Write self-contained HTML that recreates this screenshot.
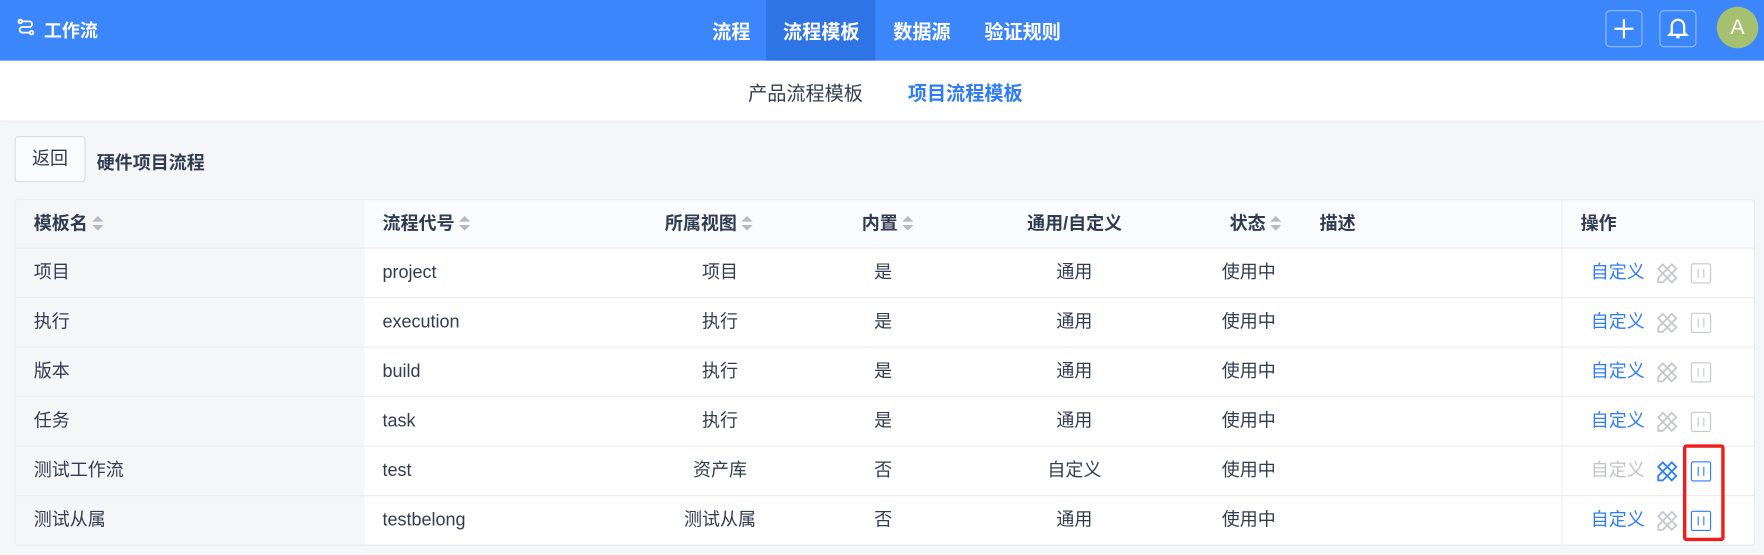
<!DOCTYPE html>
<html><head><meta charset="utf-8"><style>
*{box-sizing:border-box;margin:0;padding:0}
html,body{width:1764px;height:554px;overflow:hidden;background:#f5f6f8}
#w{position:absolute;left:0;top:0;width:1568px;height:493px;transform:scale(1.125);transform-origin:0 0;font-family:"Liberation Sans","Noto Sans CJK SC",sans-serif;font-size:16px;color:#313c52}
.nav{position:absolute;left:0;top:0;width:1568px;height:54px;background:#3a86fa;color:#fff}
.abs{position:absolute;white-space:nowrap}
.sub{position:absolute;left:0;top:54px;width:1568px;height:53px;background:#fff;box-shadow:0 1px 3px rgba(0,0,0,.05)}
.tbl{position:absolute;left:13px;top:177px;width:1547px;height:308px;background:#fff;border:1px solid #e8eaee;border-radius:3px;overflow:hidden}
.row{position:absolute;left:0;width:1547px;border-bottom:1px solid #ececf0}
.c{position:absolute;top:0;line-height:43px;white-space:nowrap}
.cc{position:absolute;top:0;line-height:43px;white-space:nowrap;width:200px;margin-left:-100px;text-align:center}
.h{font-weight:bold;color:#313c52}
.sort{display:inline-block;vertical-align:middle;margin-left:4px;width:10px;height:14px;position:relative;top:-1px}
.sort:before{content:"";position:absolute;left:0;top:0;border:5px solid transparent;border-top:0;border-bottom:5px solid #b5b9c2}
.sort:after{content:"";position:absolute;left:0;top:8px;border:5px solid transparent;border-bottom:0;border-top:5px solid #b5b9c2}
.blue{color:#2e7cf6}
</style></head><body><div id="w">
<div class="nav">
  <svg class="abs" style="left:15px;top:16px" width="16" height="16" viewBox="0 0 16 16" fill="none" stroke="#fff" stroke-width="1.6"><circle cx="3" cy="3" r="1.6"/><path d="M5 3h6a2.5 2.5 0 0 1 0 5H5a2.5 2.5 0 0 0 0 5h6"/><circle cx="13" cy="13" r="1.6"/></svg>
  <div class="abs" style="left:39px;top:14px;font-size:16px;font-weight:bold">工作流</div>
  <div class="abs" style="left:633px;top:14px;font-size:17px;font-weight:bold">流程</div>
  <div class="abs" style="left:681px;top:0;width:97px;height:54px;background:#2f74e4"></div>
  <div class="abs" style="left:696px;top:14px;font-size:17px;font-weight:bold">流程模板</div>
  <div class="abs" style="left:794px;top:14px;font-size:17px;font-weight:bold">数据源</div>
  <div class="abs" style="left:875px;top:14px;font-size:17px;font-weight:bold">验证规则</div>
  <div class="abs" style="left:1427px;top:9px;width:33px;height:33px;border:1px solid rgba(255,255,255,.45);border-radius:4px"></div>
  <svg class="abs" style="left:1433px;top:15px" width="21" height="21"><path d="M10.5 2v17M2 10.5h17" stroke="#fff" stroke-width="2"/></svg>
  <div class="abs" style="left:1475px;top:9px;width:33px;height:33px;border:1px solid rgba(255,255,255,.45);border-radius:4px"></div>
  <svg class="abs" style="left:1482px;top:14px" width="19" height="22" viewBox="0 0 19 22" fill="none" stroke="#fff" stroke-width="2"><path d="M4 15V9a5.5 5.5 0 0 1 11 0v6l2 2H2z"/><path d="M8 19h3"/></svg>
  <div class="abs" style="left:1526px;top:6px;width:37px;height:37px;border-radius:50%;background:#a5c170;color:#fff;font-size:19px;text-align:center;line-height:37px">A</div>
</div>
<div class="sub">
  <div class="abs" style="left:665px;top:15px;font-size:17px;color:#313c52">产品流程模板</div>
  <div class="abs" style="left:807px;top:15px;font-size:17px;font-weight:bold;color:#2e7cf6">项目流程模板</div>
</div>
<div class="abs" style="left:13px;top:121px;width:63px;height:41px;border:1px solid #d8dbe3;border-radius:3px;background:#fbfcfe;text-align:center;line-height:39px">返回</div>
<div class="abs" style="left:86px;top:131px;font-weight:bold">硬件项目流程</div>
<div class="tbl">
  <div class="abs" style="left:0;top:0;width:310px;height:308px;background:#f5f6f8"></div>
  <div class="abs" style="left:1374px;top:0;width:1px;height:308px;background:#ececf0"></div>
  <div class="row" style="top:0;height:43px;background:transparent">
    <div class="abs" style="left:310px;top:0;width:1064px;height:42px;background:#fafbfd"></div>
    <div class="abs" style="left:1375px;top:0;width:172px;height:42px;background:#fafbfd"></div>
    <div class="c h" style="left:16px">模板名<span class="sort"></span></div>
    <div class="c h" style="left:326px">流程代号<span class="sort"></span></div>
    <div class="c h" style="left:577px">所属视图<span class="sort"></span></div>
    <div class="c h" style="left:752px">内置<span class="sort"></span></div>
    <div class="c h" style="left:899px">通用/自定义</div>
    <div class="c h" style="left:1079px">状态<span class="sort"></span></div>
    <div class="c h" style="left:1159px">描述</div>
    <div class="c h" style="left:1391px">操作</div>
  </div>
  <div class="row" style="top:43px;height:44px"><div class="c" style="left:16px">项目</div><div class="c" style="left:326px">project</div><div class="cc" style="left:626px">项目</div><div class="cc" style="left:771px">是</div><div class="cc" style="left:941px">通用</div><div class="cc" style="left:1096px">使用中</div><div class="c blue" style="left:1400px">自定义</div>
  <svg class="abs" style="left:1457px;top:11px" width="22" height="22" viewBox="0 0 22 22" fill="none" stroke="#c4c7cc" stroke-width="1.6"><path d="M3 15L15 3l4 4L7 19H3z"/><path d="M3 7l4-4 12 12-4 4z"/></svg><div class="abs" style="left:1489px;top:13px;width:18px;height:18px;border:1.5px solid #c4c7cc;border-radius:2px"></div><div class="abs" style="left:1495px;top:18px;width:6px;height:8px;border-left:1.5px solid #c4c7cc;border-right:1.5px solid #c4c7cc"></div></div>
  <div class="row" style="top:87px;height:44px"><div class="c" style="left:16px">执行</div><div class="c" style="left:326px">execution</div><div class="cc" style="left:626px">执行</div><div class="cc" style="left:771px">是</div><div class="cc" style="left:941px">通用</div><div class="cc" style="left:1096px">使用中</div><div class="c blue" style="left:1400px">自定义</div>
  <svg class="abs" style="left:1457px;top:11px" width="22" height="22" viewBox="0 0 22 22" fill="none" stroke="#c4c7cc" stroke-width="1.6"><path d="M3 15L15 3l4 4L7 19H3z"/><path d="M3 7l4-4 12 12-4 4z"/></svg><div class="abs" style="left:1489px;top:13px;width:18px;height:18px;border:1.5px solid #c4c7cc;border-radius:2px"></div><div class="abs" style="left:1495px;top:18px;width:6px;height:8px;border-left:1.5px solid #c4c7cc;border-right:1.5px solid #c4c7cc"></div></div>
  <div class="row" style="top:131px;height:44px"><div class="c" style="left:16px">版本</div><div class="c" style="left:326px">build</div><div class="cc" style="left:626px">执行</div><div class="cc" style="left:771px">是</div><div class="cc" style="left:941px">通用</div><div class="cc" style="left:1096px">使用中</div><div class="c blue" style="left:1400px">自定义</div>
  <svg class="abs" style="left:1457px;top:11px" width="22" height="22" viewBox="0 0 22 22" fill="none" stroke="#c4c7cc" stroke-width="1.6"><path d="M3 15L15 3l4 4L7 19H3z"/><path d="M3 7l4-4 12 12-4 4z"/></svg><div class="abs" style="left:1489px;top:13px;width:18px;height:18px;border:1.5px solid #c4c7cc;border-radius:2px"></div><div class="abs" style="left:1495px;top:18px;width:6px;height:8px;border-left:1.5px solid #c4c7cc;border-right:1.5px solid #c4c7cc"></div></div>
  <div class="row" style="top:175px;height:44px"><div class="c" style="left:16px">任务</div><div class="c" style="left:326px">task</div><div class="cc" style="left:626px">执行</div><div class="cc" style="left:771px">是</div><div class="cc" style="left:941px">通用</div><div class="cc" style="left:1096px">使用中</div><div class="c blue" style="left:1400px">自定义</div>
  <svg class="abs" style="left:1457px;top:11px" width="22" height="22" viewBox="0 0 22 22" fill="none" stroke="#c4c7cc" stroke-width="1.6"><path d="M3 15L15 3l4 4L7 19H3z"/><path d="M3 7l4-4 12 12-4 4z"/></svg><div class="abs" style="left:1489px;top:13px;width:18px;height:18px;border:1.5px solid #c4c7cc;border-radius:2px"></div><div class="abs" style="left:1495px;top:18px;width:6px;height:8px;border-left:1.5px solid #c4c7cc;border-right:1.5px solid #c4c7cc"></div></div>
  <div class="row" style="top:219px;height:44px"><div class="c" style="left:16px">测试工作流</div><div class="c" style="left:326px">test</div><div class="cc" style="left:626px">资产库</div><div class="cc" style="left:771px">否</div><div class="cc" style="left:941px">自定义</div><div class="cc" style="left:1096px">使用中</div><div class="c" style="left:1400px;color:#c0c3c9">自定义</div>
  <svg class="abs" style="left:1457px;top:11px" width="22" height="22" viewBox="0 0 22 22" fill="none" stroke="#2e7cf6" stroke-width="1.6"><path d="M3 15L15 3l4 4L7 19H3z"/><path d="M3 7l4-4 12 12-4 4z"/></svg><div class="abs" style="left:1489px;top:13px;width:18px;height:18px;border:1.5px solid #2e7cf6;border-radius:2px"></div><div class="abs" style="left:1495px;top:18px;width:6px;height:8px;border-left:1.5px solid #2e7cf6;border-right:1.5px solid #2e7cf6"></div></div>
  <div class="row" style="top:263px;height:44px;border-bottom:0"><div class="c" style="left:16px">测试从属</div><div class="c" style="left:326px">testbelong</div><div class="cc" style="left:626px">测试从属</div><div class="cc" style="left:771px">否</div><div class="cc" style="left:941px">通用</div><div class="cc" style="left:1096px">使用中</div><div class="c blue" style="left:1400px">自定义</div>
  <svg class="abs" style="left:1457px;top:11px" width="22" height="22" viewBox="0 0 22 22" fill="none" stroke="#c4c7cc" stroke-width="1.6"><path d="M3 15L15 3l4 4L7 19H3z"/><path d="M3 7l4-4 12 12-4 4z"/></svg><div class="abs" style="left:1489px;top:13px;width:18px;height:18px;border:1.5px solid #2e7cf6;border-radius:2px"></div><div class="abs" style="left:1495px;top:18px;width:6px;height:8px;border-left:1.5px solid #2e7cf6;border-right:1.5px solid #2e7cf6"></div></div>
</div>
<div class="abs" style="left:1496px;top:395px;width:37px;height:86px;border:3px solid #f01c1c;border-radius:3px"></div>
</div></body></html>
